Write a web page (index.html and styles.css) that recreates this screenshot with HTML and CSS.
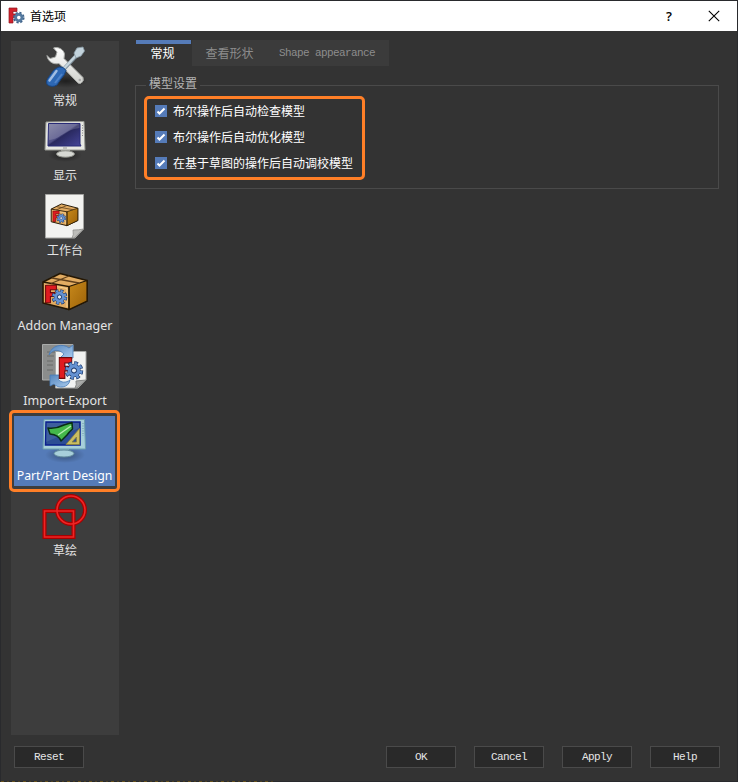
FILE: index.html
```
<!DOCTYPE html>
<html lang="zh-CN">
<head>
<meta charset="utf-8">
<title>首选项</title>
<link rel="stylesheet" href="styles.css">
</head>
<body>
<svg class="defs" width="0" height="0" aria-hidden="true">
  <defs>
    <linearGradient id="screen" x1="0" y1="0" x2="1" y2="1"><stop offset="0" stop-color="#77789b"/><stop offset=".45" stop-color="#505085"/><stop offset=".5" stop-color="#29295f"/><stop offset="1" stop-color="#46469a"/></linearGradient>
    <linearGradient id="metal" x1="0" y1="0" x2="0" y2="1"><stop offset="0" stop-color="#fff"/><stop offset="1" stop-color="#d0d1cd"/></linearGradient>
    <linearGradient id="side" x1="0" y1="0" x2="1" y2="1"><stop offset="0" stop-color="#c98a1c"/><stop offset="1" stop-color="#9c6208"/></linearGradient>
    <linearGradient id="arrow" x1="0" y1="0" x2="1" y2="1"><stop offset="0" stop-color="#5485bd"/><stop offset="1" stop-color="#a9cbee"/></linearGradient>
    <radialGradient id="shade"><stop offset="0" stop-color="#000" stop-opacity=".5"/><stop offset="1" stop-color="#000" stop-opacity="0"/></radialGradient>
    <symbol id="gear" viewBox="-10 -10 20 20">
      <circle r="7.6" fill="none" stroke="#17356a" stroke-width="4.4" stroke-dasharray="3.7 2.27"/>
      <circle r="7" fill="#17356a"/>
      <circle r="7.4" fill="none" stroke="#6592d2" stroke-width="3.2" stroke-dasharray="2.7 3.11" stroke-dashoffset="-.5"/>
      <circle r="4.7" fill="none" stroke="#6592d2" stroke-width="3.600"/>
      <circle r="2.6" fill="#e8edf4" stroke="#17356a"/>
    </symbol>
    <symbol id="mark" viewBox="0 0 14 22">
      <path d="M.7.7H13.3V6H6.3V9.4H11.5V14H6.3V21.3H.7Z" fill="#e01b20" stroke="#6f0808" stroke-width="1.2"/>
    </symbol>
    <symbol id="box" viewBox="0 0 48 48">
      <path d="M2 15 19 6.500 46 13.500V34L28 42.500 2 36Z" fill="#e2ac62" stroke="#241704" stroke-width="1.600" stroke-linejoin="round"/>
      <path d="M28 19.500 46 13.500V34L28 42.500Z" fill="url(#side)" stroke="#241704" stroke-width="1.200"/>
      <path d="M2 15 28 19.500V42.500" fill="none" stroke="#241704" stroke-width="1.400"/>
      <path d="m11 11 27 5M10 16.500 28 9" stroke="#60401b" stroke-width="1.300"/>
      <path d="M4 17.500 26 21.500V40" fill="none" stroke="#f6d295"/>
      <use href="#mark" x="4" y="17" width="12" height="20"/>
      <use href="#gear" x="10.500" y="22" width="16" height="16"/>
    </symbol>
  </defs>
</svg>
<div class="window">
  <header class="titlebar">
    <svg class="app-icon" viewBox="0 0 17 17"><path d="M1 1H9V4.500H5V7H8V10.500H5V16H1Z" fill="#d3212b" stroke="#8d1720" stroke-width=".7"/><circle cx="10.800" cy="10.600" r="4.800" fill="none" stroke="#3e6187" stroke-width="2" stroke-dasharray="2.100 1.670"/><circle cx="10.800" cy="10.600" r="3.200" fill="none" stroke="#54799f" stroke-width="2.800"/></svg>
    <span class="title">首选项</span>
    <span class="help-mark">?</span>
    <svg class="close" viewBox="0 0 12 12"><path d="m.8.8 10.400 10.400m0-10.400L.8 11.200" stroke="#000" stroke-width="1.100"/></svg>
  </header>
  <main class="content">
    <nav class="sidebar">
      <div class="item">
        <svg viewBox="0 0 48 48">
          <ellipse cx="25" cy="39" rx="22" ry="7" fill="url(#shade)"/>
          <path d="M12.500 6C17 4.500 22.500 7 23.500 12L23 16.500 42 35.500Q43.500 39.500 39.500 41.500Q37.500 42 36 40L18 21.500C12 23 6.500 19 6 13.500L9 16.500 14.500 15 16 10Z" fill="url(#metal)" stroke="#a5a7a4"/>
          <circle cx="38.800" cy="38" r="1.300" fill="#aaa"/>
          <path d="M22 28 35 14" stroke="#8495a0" stroke-width="4"/><path d="M22 27.500 35 13.500" stroke="#c6d5dd" stroke-width="2.400"/>
          <path d="M33 11 36 6 42 5 43.500 9 40 14 35 16Z" fill="#c3d3dc" stroke="#8798a2" stroke-width=".8"/>
          <path d="M18 25Q22.500 24 25 28.500Q24 33 20 37L16 43Q11 46 6 42.500Q4.500 39 7 36L12.500 28.500Q15 26 18 25Z" fill="#2d68b5" stroke="#174480"/>
          <path d="m15.500 29-7 9.500" stroke="#a0bde2" stroke-width="2.400" stroke-linecap="round"/><path d="m21 32-7 9" stroke="#4d82c9" stroke-width="2"/>
        </svg><span>常规</span>
      </div>
      <div class="item">
        <svg viewBox="0 0 48 48">
          <ellipse cx="24" cy="38" rx="17" ry="7" fill="url(#shade)"/>
          <path d="M20 32h9v4h-9z" fill="#aeb0ab"/><ellipse cx="24.500" cy="37" rx="9" ry="3.200" fill="#d6d8d3" stroke="#8d8f89"/>
          <path d="M5 5 43 4.500 44 33H4Z" fill="#e7e8e3" stroke="#989a94" stroke-linejoin="round"/>
          <path d="M7.500 6.500H39V27L40 29H7Z" fill="url(#screen)" stroke="#292b77"/>
          <path d="M8 7H38.500V11C23 13 20 22 8 23Z" fill="#fff" opacity=".16"/>
          <path d="M41.500 8v12" stroke="#888" stroke-dasharray="1 1.500"/><path d="M22 31h4" stroke="#999"/>
        </svg><span>显示</span>
      </div>
      <div class="item">
        <svg viewBox="0 0 48 48">
          <path d="M4.500 2.500H42.500V37L34 46H4.500Z" fill="#f2f2f0" stroke="#a5a5a2"/>
          <path d="M42.500 37 33 46H31Q33 43 32 38Q38 38 42.500 37Z" fill="#bdbdb9" stroke="#858583" stroke-width=".7"/>
          <use href="#box" x="9" y="8" width="29" height="29"/>
        </svg><span>工作台</span>
      </div>
      <div class="item"><svg viewBox="0 0 48 48"><use href="#box" width="48" height="48"/></svg><span class="latin">Addon Manager</span></div>
      <div class="item">
        <svg viewBox="0 0 48 48">
          <path d="M1.500 2.500H32V38H1.500Z" fill="#8b8d8c" stroke="#a9abaa"/><path d="M6 10h9m-9 4h7m-7 5h6m-6 4h6m-6 5h6" stroke="#686a69"/>
          <path d="M14.500 9.500H45V38L37 46H14.500Z" fill="#f1f2f1" stroke="#a6a8a6"/>
          <path d="M45 38 36 46H34Q36 43 35 39Z" fill="#a9aaa9" stroke="#858785"/>
          <path d="M8 13C10 3 22 1 28 6L32 3V16H19L23 12C18 7 12 7 8 13Z" fill="url(#arrow)" stroke="#487bb7" stroke-width=".8"/>
          <path d="M29 38C28 46 17 47 13 42L9 44V33H20L17 37C20 41 25 41 29 38Z" fill="url(#arrow)" stroke="#487bb7" stroke-width=".8"/>
          <use href="#mark" x="17.500" y="14.500" width="14" height="23"/><use href="#gear" x="23.500" y="19" width="19" height="19"/>
        </svg><span class="latin">Import-Export</span>
      </div>
      <div class="item selected">
        <svg viewBox="0 0 48 48">
          <ellipse cx="24" cy="38" rx="20" ry="8" fill="url(#shade)" opacity=".7"/>
          <path d="M18 32h10v4H18z" fill="#80a8b7"/><ellipse cx="23" cy="36.500" rx="10" ry="3.500" fill="#a8cfda" stroke="#638b9c"/>
          <path d="M3 2.500H43.500L44.500 32H2Z" fill="#a7cfda" stroke="#6d9fae" stroke-linejoin="round"/>
          <path d="M5 5H39V28H4.500Z" fill="#2c4d94" stroke="#0a1f8e" stroke-width="1.500"/>
          <path d="M5.500 6H38V11L5 25Z" fill="#7197b9" opacity=".25"/>
          <path d="M7 11Q15 12 23 8L31 5.500L31.500 12Q28 15 26 18L20 24Q18 18 9 17Z" fill="#44b84a" stroke="#092e16" stroke-width="1.500" stroke-linejoin="round"/><path d="m17 18 13-9" stroke="#b3ecb0" stroke-width="1.500"/>
          <path d="M38.500 11.500V27.500H25ZM35.500 20V25H31Z" fill="#c9bd61" fill-rule="evenodd" stroke="#8a813b" stroke-width=".8"/>
          <path d="M42 6v13" stroke="#6d97a4" stroke-dasharray="1 1.500"/>
        </svg><span class="latin">Part/Part Design</span>
      </div>
      <div class="item">
        <svg viewBox="0 0 48 48"><g fill="none" stroke="#a90000" stroke-width="4"><path d="M3.500 19H32.500V45H3.500Z"/><circle cx="30" cy="18" r="14"/></g><g fill="none" stroke="#ef2525" stroke-width="1.600"><path d="M3.500 19H32.500V45H3.500Z"/><circle cx="30" cy="18" r="14"/></g></svg><span>草绘</span>
      </div>
    </nav>
    <section class="panel">
      <div class="tabs"><span class="tab active">常规</span><span class="tab shape">查看形状</span><span class="tab appearance mono">Shape appearance</span></div>
      <fieldset class="group">
        <legend>模型设置</legend>
        <div class="options">
          <label class="option"><svg viewBox="0 0 12 12"><path d="m2.500 6.500 2 2 5-5" fill="none" stroke="#fff" stroke-width="2"/></svg>布尔操作后自动检查模型</label>
          <label class="option"><svg viewBox="0 0 12 12"><path d="m2.500 6.500 2 2 5-5" fill="none" stroke="#fff" stroke-width="2"/></svg>布尔操作后自动优化模型</label>
          <label class="option"><svg viewBox="0 0 12 12"><path d="m2.500 6.500 2 2 5-5" fill="none" stroke="#fff" stroke-width="2"/></svg>在基于草图的操作后自动调校模型</label>
        </div>
      </fieldset>
    </section>
  </main>
  <footer class="buttons mono"><button class="reset">Reset</button><button>OK</button><button>Cancel</button><button>Apply</button><button>Help</button></footer>
  <div class="edge"></div>
</div>
</body>
</html>
```
FILE: styles.css
```
* { box-sizing: border-box; }
body { margin: 0; background: #292a2d; font: 12px/16px "Noto Sans CJK SC", sans-serif; color: #fff; }
.defs { position: absolute; }
.window { width: 738px; height: 782px; padding: 1px 1px 0; display: flex; flex-direction: column; }
.titlebar { height: 30px; flex: none; display: flex; align-items: center; background: #fff; color: #000; padding: 0 17px 1px 7px; }
.app-icon { width: 17px; height: 17px; margin-right: 5px; }
.title { flex: 1; }
.help-mark { font: 600 13px/16px "Open Sans", sans-serif; margin-right: 36px; }
.close { width: 12px; height: 12px; }
.content { height: 704px; flex: none; display: flex; padding: 9px 18px 0 10px; background: #333; }
.sidebar { width: 108px; height: 694px; margin-top: 1px; background: #3d3d3d; }
.item { height: 75px; padding-top: 1px; display: flex; flex-direction: column; align-items: center; color: #e4e4e4; white-space: nowrap; }
.item svg { width: 48px; height: 48px; flex: none; }
.item span { margin-top: 1px; line-height: 18px; }
.item .latin { margin-top: 2px; font-family: "Noto Sans", sans-serif; font-size: 12.500px; }
.selected { position: relative; width: 101px; height: 70px; margin: 0 4px 5px 3px; background: #557bb8; color: #fff; }
.selected .latin { font-size: 12.300px; }
.selected::after { content: ""; position: absolute; inset: -6px -5px -6px; border: 3px solid #ff7f27; border-radius: 5px; }
.panel { flex: 1; margin-left: 16px; }
.tabs { display: flex; height: 26px; margin-left: 1px; }
.tab { background: #3b3b3b; color: #8d8d8d; text-align: center; line-height: 26px; }
.tab.active { width: 55px; margin-right: 1px; padding-right: 2px; background: #333; color: #fff; border-top: 4px solid #557bb8; line-height: 18px; }
.shape { width: 75px; }
.appearance { width: 122px; padding-right: 2px; }
.mono { font-family: "Liberation Mono", monospace; font-size: 11px; letter-spacing: -.6px; }
.group { height: 112px; margin: 11px 0 0; padding: 0 0 0 8px; border: 1px solid #4a4a4a; min-width: 0; }
.group legend { position: relative; top: -2px; margin-left: 2px; padding: 0 3px; color: #b4b4b4; line-height: 16px; }
.options { width: 221px; height: 84px; margin-top: 3px; padding: 0 8px; border: 3px solid #ff7f27; border-radius: 5px; }
.option { display: flex; align-items: center; height: 26px; white-space: nowrap; }
.option:first-child { margin-top: -1px; }
.option svg { width: 12px; height: 12px; margin-right: 6px; background: #557bb8; }
.buttons { flex: 1; display: flex; align-items: flex-start; gap: 18px; padding: 11px 17px 0 13px; background: #333; }
button { width: 70px; height: 22px; padding: 0; font: inherit; letter-spacing: inherit; color: #e6e6e6; background: #292929; border: 1px solid #4a4a4a; }
.reset { margin-right: auto; }
.edge { height: 1px; flex: none; width: 275px; background: repeating-linear-gradient(90deg, #66501b 0 3px, #292a2d 3px 6px, #4c3f20 6px 8px, #292a2d 8px 11px); }
```
